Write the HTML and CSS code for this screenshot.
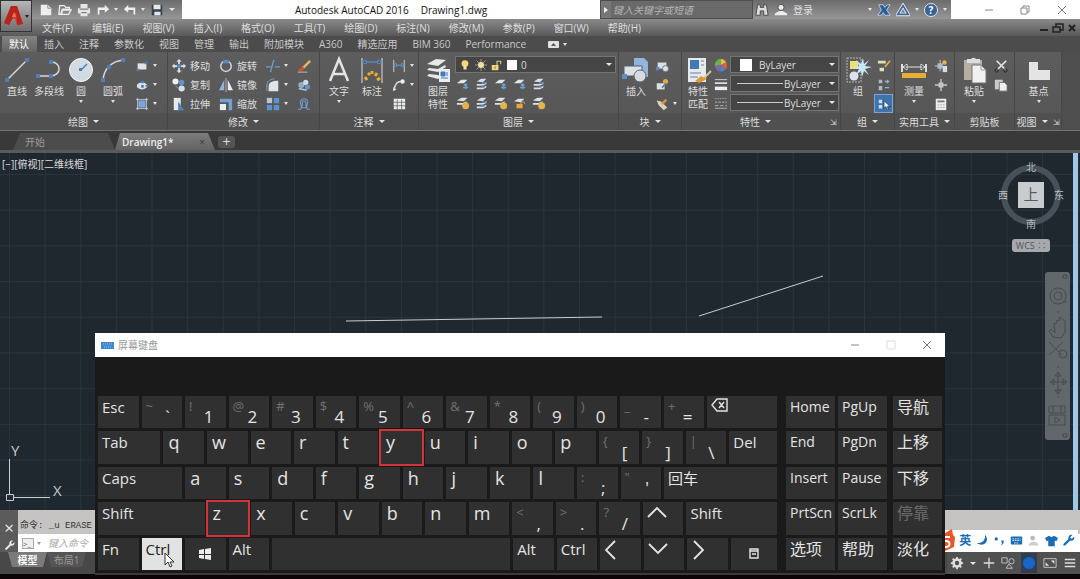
FILE: index.html
```html
<!DOCTYPE html>
<html lang="zh-CN">
<head>
<meta charset="utf-8">
<title>Autodesk AutoCAD 2016 - Drawing1.dwg</title>
<link rel="stylesheet" href="styles.css">
</head>
<body>
<svg class="sprite" aria-hidden="true">
  <symbol id="line" viewBox="0 0 28 28"><path d="M4 24 24 4" stroke="#d8d8d8" stroke-width="1.5"/><path d="M2 22h4v4H2zM22 2h4v4h-4z" fill="#4f7fb5"/></symbol>
  <symbol id="pline" viewBox="0 0 28 28"><path d="M3 20h12c12 0 12-14 1-14" fill="none" stroke="#d8d8d8" stroke-width="1.5"/><path d="M1 18h4v4H1zM14 18h4v4h-4zM14 4h4v4h-4z" fill="#4f7fb5"/></symbol>
  <symbol id="circle" viewBox="0 0 28 28"><circle cx="14" cy="14" r="11.500" fill="#d3dbe2" stroke="#f3f6f8"/><path d="m14 14 6-6" stroke="#4f7fb5" stroke-width="1.500"/><path d="M12 12h3v3h-3z" fill="#4f7fb5"/></symbol>
  <symbol id="arc" viewBox="0 0 28 28"><path d="M4 24C5 13 12 5 25 4" fill="none" stroke="#d8d8d8" stroke-width="1.500"/><path d="M2 22h4v4H2zM8 9h4v4H8zM22 2h4v4h-4z" fill="#4f7fb5"/></symbol>
  <symbol id="rect" viewBox="0 0 16 16"><path d="M3 5h10v7H3z" fill="#e3e5e8"/><path d="M2 11h3v3H2zM11 3h3v3h-3z" fill="#4f7fb5"/></symbol>
  <symbol id="ellipse" viewBox="0 0 16 16"><ellipse cx="8" cy="9" rx="6" ry="4" fill="#dbe1e8"/><path d="M7 8h3v3H7zM7 3h3v3H7zM12 8h3v2h-3z" fill="#4f7fb5"/></symbol>
  <symbol id="hatch" viewBox="0 0 16 16"><path d="M4 4h8v8H4z" fill="#7ba3dc"/><path d="M3 1v14M13 1v14M1 3h14M1 13h14" stroke="#c8d4e4"/></symbol>
  <symbol id="move" viewBox="0 0 16 16"><path d="M8 0 5 3h2v3h2V3h2zM8 16l-3-3h2v-3h2v3h2zM0 8l3-3v2h3v2H3v2zM16 8l-3-3v2h-3v2h3v2z" fill="#d5e2ef"/><path d="M6 6h4v4H6z" fill="#5b8ac0"/></symbol>
  <symbol id="copy" viewBox="0 0 16 16"><circle cx="4" cy="4" r="3.500" fill="#eee"/><circle cx="11" cy="5" r="3" fill="#6492c8"/><circle cx="11" cy="12" r="3.500" fill="#d7e1ec"/><path d="m4 9 3 3" stroke="#8eb3db"/></symbol>
  <symbol id="stretch" viewBox="0 0 16 16"><path d="M2 1h8v14H2z" fill="#e5e9ee"/><path d="m7 5 7 10H7z" fill="#4f82bb"/></symbol>
  <symbol id="rotate" viewBox="0 0 16 16"><path d="M5 3a6 6 0 1 0 6 0" fill="none" stroke="#c8d0d8" stroke-width="1.800"/><path d="M5 1h6v4H5z" fill="#5b8ac0"/></symbol>
  <symbol id="mirror" viewBox="0 0 16 16"><path d="M6 2v12H0z" fill="#8fb4dc"/><path d="M10 2v12h6z" fill="#e7ebef"/><path d="M8 0v16" stroke="#bbb"/></symbol>
  <symbol id="scale" viewBox="0 0 16 16"><path d="M1 2h14v13h-4V6H1z" fill="#77a0cd"/><path d="M1 8h7v7H1z" fill="#eee"/></symbol>
  <symbol id="trim" viewBox="0 0 16 16"><path d="M0 9h6M10 9h6M9 1 5 15" stroke="#7199c6" stroke-width="1.600"/></symbol>
  <symbol id="fillet" viewBox="0 0 16 16"><path d="M3 15V9c0-4 4-6 11-6v12z" fill="#dfe4e9"/><path d="M1 15V8c0-5 5-7 9-7" fill="none" stroke="#81acd9"/></symbol>
  <symbol id="array" viewBox="0 0 16 16"><path d="M1 1h6v6H1z" fill="#b9c5d3"/><path d="M9 1h6v6H9zM1 9h6v6H1zM9 9h6v6H9z" fill="#5d92d0"/></symbol>
  <symbol id="erase" viewBox="0 0 16 16"><path d="m14 1 2 2-8 8-2-2z" fill="#e1b760"/><path d="m6 8 3 3-4 3-4 0z" fill="#d25135"/><path d="M1 15h11" stroke="#ccc"/></symbol>
  <symbol id="explode" viewBox="0 0 16 16"><circle cx="5" cy="8" r="3.500" fill="#8eaeca"/><circle cx="10" cy="5" r="3" fill="#d2dce7"/><circle cx="12" cy="10" r="3" fill="#6593c2"/><path d="m2 12 9 2" stroke="#b8c8d7" stroke-width="2"/></symbol>
  <symbol id="offset" viewBox="0 0 16 16"><path d="M1 14h3c3-2-1-6 0-9 1-4 7-4 8 0 1 3-3 7 0 9h3M5 12h6c-2-3 0-4-1-6-1-2-4-2-4 0 0 3 1 3-1 6z" fill="none" stroke="#6f9ac4" stroke-width="1.300"/></symbol>
  <symbol id="bigtext" viewBox="0 0 28 28"><path d="M5 25 14 3l9 22M8 18h12" fill="none" stroke="#e4e4e4" stroke-width="2.500"/></symbol>
  <symbol id="dim" viewBox="0 0 28 28"><path d="M4 2v25M24 2v25" stroke="#ddd"/><path d="M4 6h20M4 6l4-2v4zM24 6l-4-2v4z" stroke="#5e96d1"/><path d="m7 21 2 3M10 17l2 2M14 15v3M19 17l-2 3M22 22l-3 2" stroke="#e9ae31" stroke-width="3"/></symbol>
  <symbol id="dimlin" viewBox="0 0 16 16"><path d="M2 1v14M14 1v14" stroke="#ddd"/><path d="M2 7h12M2 7l3-2v4zM14 7l-3-2v4z" stroke="#6ca0d8"/></symbol>
  <symbol id="leader" viewBox="0 0 16 16"><path d="M2 14C4 6 6 4 10 4" fill="none" stroke="#ddd" stroke-width="1.500"/><circle cx="12" cy="4" r="2.500" fill="#eee"/><path d="m1 15 1-5 3 3z" fill="#ddd"/></symbol>
  <symbol id="table" viewBox="0 0 16 16"><path d="M2 2h13v12H2z" fill="#eee"/><path d="M2 6h13M2 10h13M6 3v11M11 3v11" stroke="#68737d"/></symbol>
  <symbol id="stack" viewBox="0 0 28 28"><path d="m3 8 9-5 10 1-8 6zM3 14l2-2 9 1 7-4 1 2-8 5zM3 20l2-2 9 1 3 2-3 2z" fill="#e6e9ec"/><path d="M15 13h11v13H15z" fill="#e6edf4"/><path d="M17 16h4v4h-4zM17 22h7M23 16v4" fill="#477ab0" stroke="#477ab0"/></symbol>
  <symbol id="layer" viewBox="0 0 16 16"><path d="m2 5 5-3h6l-4 4zM2 8h7l4-2v2L9 10H2zM2 12h7l4-2v2l-4 2H2z" fill="#d8dee3"/><path d="M8 7h4M7 11h4" stroke="#5686b8" stroke-width="2"/></symbol>
  <symbol id="layersun" viewBox="0 0 16 16"><path d="m1 5 5-3h7L9 6zM1 8h7l4-2v2L8 10H1z" fill="#dfe2e4"/><circle cx="11" cy="11" r="4" fill="#e4b44b"/></symbol>
  <symbol id="layerlock" viewBox="0 0 16 16"><path d="m1 6 5-3h7L9 7z" fill="#dfe2e4"/><path d="M4 9h7v5H4z" fill="#e4a83f"/><path d="M9 9V7h4v2" fill="none" stroke="#e4a83f"/></symbol>
  <symbol id="layerblue" viewBox="0 0 16 16"><path d="m1 7 5-4h7L9 7z" fill="#e2e6e9"/><path d="M9 9h4M11 7v7M8 12h6" stroke="#6c9fd3" stroke-width="1.800"/></symbol>
  <symbol id="bulb" viewBox="0 0 16 16"><circle cx="8" cy="6" r="4.500" fill="#f4d779"/><path d="M6 9h4v5H6z" fill="#ede3b1"/></symbol>
  <symbol id="sun" viewBox="0 0 16 16"><path d="M8 0v16M0 8h16M2 2l12 12M14 2 2 14" stroke="#b8b399"/><circle cx="8" cy="8" r="4" fill="#f0dfab"/></symbol>
  <symbol id="lock" viewBox="0 0 16 16"><path d="M1 8h9v7H1z" fill="#f0d476"/><path d="M8 8V3h5v4" fill="none" stroke="#d6c68f" stroke-width="1.500"/><path d="M5 10h1v3H5z" fill="#555"/></symbol>
  <symbol id="insert" viewBox="0 0 28 28"><path d="M12 2h10l4 4v15H12z" fill="#92b5dc"/><path d="M2 10h18v10H2z" fill="#dde0e4" stroke="#515d68"/><circle cx="18" cy="20" r="6" fill="#d6dbe0" stroke="#5b6874"/><path d="M0 18h5v5H0z" fill="#5b8dc3"/></symbol>
  <symbol id="block" viewBox="0 0 16 16"><path d="M3 4h10v7H3z" fill="#dae0e6"/><circle cx="12" cy="11" r="3.500" fill="#dce1e6" stroke="#626e79"/><path d="M1 9h4v4H1z" fill="#578bc2"/></symbol>
  <symbol id="blockedit" viewBox="0 0 16 16"><path d="M2 6h9v7H2z" fill="#d9dfe6"/><circle cx="12" cy="4" r="3" fill="#e7a544"/><path d="m8 11 5-5" stroke="#547da9" stroke-width="2"/></symbol>
  <symbol id="tag" viewBox="0 0 16 16"><path d="m2 4 5 1 7 7-4 3-6-6z" fill="#dbd1bd"/><path d="m13 3-5 5" stroke="#ce9540" stroke-width="3"/></symbol>
  <symbol id="match" viewBox="0 0 28 28"><path d="M4 2h18v24H4z" fill="#e7eaed"/><path d="M6 4h9v9H6z" fill="#447ab3"/><path d="M17 5h3M17 9h3M6 17h11M6 21h8" stroke="#6983a0"/><path d="m27 15-7 7" stroke="#d8c39a" stroke-width="2"/><path d="m17 20 6 3-8 4-4-2z" fill="#d99b3b"/></symbol>
  <symbol id="wheel" viewBox="0 0 16 16"><path d="M8 8V1a7 7 0 0 1 6 4z" fill="#e7bd45"/><path d="m8 8 6-3a7 7 0 0 1-1 8z" fill="#e25b42"/><path d="m8 8 5 5a7 7 0 0 1-7 2z" fill="#4486ce"/><path d="m8 8-2 7a7 7 0 0 1-5-6z" fill="#8b62ae"/><path d="M8 8 1 9a7 7 0 0 1 7-8z" fill="#6cae52"/></symbol>
  <symbol id="weights" viewBox="0 0 16 16"><path d="M1 3h14" stroke="#ddd"/><path d="M1 7h14" stroke="#ddd" stroke-width="2"/><path d="M1 13h14" stroke="#eee" stroke-width="4"/></symbol>
  <symbol id="dashes" viewBox="0 0 16 16"><path d="M1 3h14" stroke="#bbb" stroke-dasharray="1 1"/><path d="M1 7h14" stroke="#bbb" stroke-dasharray="3 1"/><path d="M1 11h14" stroke="#bbb" stroke-dasharray="4 2"/><path d="M1 14h14" stroke="#bbb"/></symbol>
  <symbol id="group" viewBox="0 0 28 28"><path d="M3 2h14v24H3z" fill="none" stroke="#b6b6b6" stroke-dasharray="2 1"/><path d="M6 5h8v8H6z" fill="#ecdf7a"/><circle cx="10" cy="20" r="4.500" fill="#dde4e9"/><path d="m19 2 1 6 5-4-4 6 7 1-7 2 4 6-5-4-2 6-1-6-5 4 3-6-6-1 6-2-3-6 5 4z" fill="#c8e6fa"/></symbol>
  <symbol id="groupedit" viewBox="0 0 16 16"><path d="M1 2h9v3H1zM3 10h5v4H3z" fill="#dfe2b8"/><path d="m15 2-6 7" stroke="#e2ab43" stroke-width="2"/></symbol>
  <symbol id="ungroup" viewBox="0 0 16 16"><path d="M2 2h4v4H2zM2 9h4v5H2z" fill="#adbac9"/><path d="M9 4h5M12 2v4M9 11h5" stroke="#96b0d3" stroke-width="1.500"/></symbol>
  <symbol id="select" viewBox="0 0 16 16"><path d="M2 3h4v4H2zM2 9h4v4H2z" fill="#c7ddf3"/><path d="M8 4v9l2-2 2 4 1-1-1-3h3z" fill="#fff" stroke="#17395d"/></symbol>
  <symbol id="measure" viewBox="0 0 28 28"><path d="M2 8v8M26 8v8" stroke="#ddd" stroke-width="2"/><path d="M3 11h22M3 11l4-3v6zM25 11l-4-3v6z" stroke="#dce3e9"/><path d="M2 17h24v5H2z" fill="#e6ae36"/></symbol>
  <symbol id="idpoint" viewBox="0 0 16 16"><path d="M7 1v13M1 8h9" stroke="#d1d5d9"/><path d="M4 5h6v6H4z" fill="#aebcca"/><path d="M10 8h5v7h-5z" fill="#ddd"/><circle cx="12" cy="4" r="2.500" fill="#e8b34b"/></symbol>
  <symbol id="point" viewBox="0 0 16 16"><path d="M8 1v14M1 8h14M6 6h4v4H6z" fill="none" stroke="#c5cad0" stroke-width="1.500"/></symbol>
  <symbol id="calc" viewBox="0 0 16 16"><path d="M2 2h12v13H2z" fill="#ececec"/><path d="M4 4h8v2H4z" fill="#777"/><path d="M4 9h8M4 12h8" stroke="#aaa" stroke-dasharray="2 1"/></symbol>
  <symbol id="paste" viewBox="0 0 28 28"><path d="M4 4h18v20H4z" fill="#b7aea3"/><path d="M7 3h4a3 3 0 0 1 5 0h4v4H7z" fill="#ddd"/><path d="M12 9h9l5 5v13H12z" fill="#f1f1f1" stroke="#777"/><path d="M21 9v5h5" fill="none" stroke="#999"/></symbol>
  <symbol id="cut" viewBox="0 0 16 16"><path d="m3 2 10 10M14 2 4 12" stroke="#e2e2e2" stroke-width="2"/><circle cx="3" cy="13" r="2" fill="none" stroke="#222"/><circle cx="13" cy="13" r="2" fill="none" stroke="#222"/></symbol>
  <symbol id="pages" viewBox="0 0 16 16"><path d="M1 2h9v11H1z" fill="#ccc"/><path d="M6 5h6l3 3v7H6z" fill="#eee" stroke="#666"/></symbol>
  <symbol id="base" viewBox="0 0 28 28"><path d="M4 6h9v8h12v10H4z" fill="#e4e4e4"/></symbol>
  <symbol id="undo" viewBox="0 0 16 16"><path d="M1 7 6 2v3h8v8h-2V8H6v3z" fill="#eee"/></symbol>
  <symbol id="redo" viewBox="0 0 16 16"><path d="m15 7-5-5v3H2v8h2V8h6v3z" fill="#eee"/></symbol>
  <symbol id="wrench" viewBox="0 0 16 16"><path d="m2 12 6-6c-1-3 2-6 5-5l-3 3 2 2 3-3c1 4-2 6-5 5l-6 6c-2 1-3-1-2-2z" fill="currentColor"/></symbol>
</svg>

<div class="app">
  <header class="top">
    <button class="appmenu" aria-label="应用程序菜单"><svg width="20" height="22" viewBox="0 0 20 22"><path d="M7 1h6l6 18-6 1-2-6H8l-3 6-5-2z" fill="#d8412f"/><path d="m7 1-7 17 5 2 7-13 1 13 6-1-6-18z" fill="#b5251b"/><path d="m8 12 2-5 2 5z" fill="#ed7662"/></svg><i class="caret dark"></i></button>
    <div class="titlebar">
      <div class="quick">
        <button aria-label="新建"><svg viewBox="0 0 16 16"><path d="M2 2h8l4 4v8H2z" fill="#eee"/><path d="M10 2v4h4" stroke="#888" fill="none"/></svg></button>
        <button aria-label="打开"><svg viewBox="0 0 16 16"><path d="M2 3h5l2 2h4v2H5l-2 6H1zM5 8h10l-3 5H4z" fill="none" stroke="#eee" stroke-width="1.500"/></svg></button>
        <button aria-label="打印"><svg viewBox="0 0 16 16"><path d="M4 1h8v5h3v6h-3v3H4v-3H1V6h3z" fill="#e5e5e5"/><path d="M3 7h10M5 11h6" stroke="#555"/></svg></button>
        <button aria-label="重做"><svg><use href="#redo"/></svg><i class="caret"></i></button>
        <button aria-label="放弃"><svg><use href="#undo"/></svg><i class="caret"></i></button>
        <button aria-label="保存"><svg viewBox="0 0 16 16"><path d="M2 2h12v12H2z" fill="#36424d"/><path d="M4 2h8v5H4zM5 10h7v4H5z" fill="#e5e9ec"/></svg></button>
        <button aria-label="自定义"><i class="caret wide"></i></button>
      </div>
      <div class="doc"><span>Autodesk AutoCAD 2016</span><span>Drawing1.dwg</span></div>
      <div class="search"><i class="right"></i><input aria-label="搜索" placeholder="键入关键字或短语"></div>
      <div class="account">
        <svg viewBox="0 0 16 16"><path d="M3 2h3v3h4V2h3l2 12h-5V9H6v5H1z" fill="#dedede" stroke="#444"/></svg>
        <svg viewBox="0 0 16 16"><circle cx="8" cy="5" r="3.500" fill="#e9edf0" stroke="#444"/><path d="M6 9h4l5 3v2H1v-2z" fill="#e9edf0"/></svg>
        <button>登录</button>
        <i class="caret push"></i>
        <svg viewBox="0 0 16 16"><path d="M2 2h5l2 3 3-3h3l-4 6 4 6H9l-2-3-2 3H1l4-6z" fill="#2d5d9b" stroke="#c5d4e5"/></svg>
        <svg viewBox="0 0 16 16"><path d="M8 3 2 13h12z" fill="none" stroke="#e4eaf2" stroke-width="4"/><path d="M8 3 2 13h12z" fill="none" stroke="#416898" stroke-width="2"/></svg>
        <i class="caret"></i>
        <button class="help" aria-label="帮助">?</button><i class="caret"></i>
      </div>
      <div class="winctl">
        <button aria-label="最小化"><svg viewBox="0 0 12 12"><path d="M2 6h8" stroke="#888"/></svg></button>
        <button aria-label="还原"><svg viewBox="0 0 12 12"><path d="M2 4h6v6H2zM4 4V2h6v6H8" fill="none" stroke="#888"/></svg></button>
        <button aria-label="关闭"><svg viewBox="0 0 12 12"><path d="m2 2 8 8M10 2l-8 8" stroke="#777"/></svg></button>
      </div>
    </div>
    <nav class="menubar">
      <button>文件(F)</button><button>编辑(E)</button><button>视图(V)</button><button>插入(I)</button><button>格式(O)</button><button>工具(T)</button><button>绘图(D)</button><button>标注(N)</button><button>修改(M)</button><button>参数(P)</button><button>窗口(W)</button><button>帮助(H)</button>
      <div class="mdi"><svg viewBox="0 0 12 12"><path d="M2 8h8" stroke="#222" stroke-width="2"/></svg><svg viewBox="0 0 12 12"><path d="M1 5h7v5H1zM4 5V2h7v6H8" fill="none" stroke="#222" stroke-width="1.500"/></svg><svg viewBox="0 0 12 12"><path d="m3 3 6 6M9 3 3 9" stroke="#222" stroke-width="2"/></svg></div>
    </nav>
  </header>

  <nav class="tabs">
    <button class="on">默认</button><button>插入</button><button>注释</button><button>参数化</button><button>视图</button><button>管理</button><button>输出</button><button>附加模块</button><button>A360</button><button>精选应用</button><button>BIM 360</button><button>Performance</button>
    <button class="cam" aria-label="显示"><svg width="11" height="7" viewBox="0 0 11 7"><rect width="11" height="7" rx="1" fill="#e2e2e2"/><path d="m3 5 2.500-3L8 5z" fill="#555"/></svg><i class="caret"></i></button>
  </nav>

  <div class="ribbon">
    <section class="panel p-draw"><div class="tools">
      <button class="big"><svg><use href="#line"/></svg>直线</button>
      <button class="big"><svg><use href="#pline"/></svg>多段线</button>
      <button class="big"><svg><use href="#circle"/></svg>圆<i class="caret"></i></button>
      <button class="big"><svg><use href="#arc"/></svg>圆弧<i class="caret"></i></button>
      <div class="col"><button aria-label="矩形"><svg><use href="#rect"/></svg><i class="caret"></i></button><button aria-label="椭圆"><svg><use href="#ellipse"/></svg><i class="caret"></i></button><button aria-label="图案填充"><svg><use href="#hatch"/></svg><i class="caret"></i></button></div>
    </div><h2>绘图<i class="caret wide"></i></h2></section>

    <section class="panel p-mod"><div class="tools">
      <div class="col"><button><svg><use href="#move"/></svg>移动</button><button><svg><use href="#copy"/></svg>复制</button><button><svg><use href="#stretch"/></svg>拉伸</button></div>
      <div class="col"><button><svg><use href="#rotate"/></svg>旋转</button><button><svg><use href="#mirror"/></svg>镜像</button><button><svg><use href="#scale"/></svg>缩放</button></div>
      <div class="col"><button aria-label="修剪"><svg><use href="#trim"/></svg><i class="caret"></i></button><button aria-label="圆角"><svg><use href="#fillet"/></svg><i class="caret"></i></button><button aria-label="阵列"><svg><use href="#array"/></svg><i class="caret"></i></button></div>
      <div class="col"><button aria-label="删除"><svg><use href="#erase"/></svg></button><button aria-label="分解"><svg><use href="#explode"/></svg></button><button aria-label="偏移"><svg><use href="#offset"/></svg></button></div>
    </div><h2>修改<i class="caret wide"></i></h2></section>

    <section class="panel p-ann"><div class="tools">
      <button class="big"><svg><use href="#bigtext"/></svg>文字<i class="caret"></i></button>
      <button class="big"><svg><use href="#dim"/></svg>标注</button>
      <div class="col"><button aria-label="线性"><svg><use href="#dimlin"/></svg><i class="caret"></i></button><button aria-label="引线"><svg><use href="#leader"/></svg><i class="caret"></i></button><button aria-label="表格"><svg><use href="#table"/></svg></button></div>
    </div><h2>注释<i class="caret wide"></i></h2></section>

    <section class="panel p-lay"><div class="tools">
      <button class="big"><svg><use href="#stack"/></svg>图层<br>特性</button>
      <div class="layers">
        <button class="combo" aria-label="当前图层"><svg><use href="#bulb"/></svg><svg><use href="#sun"/></svg><svg><use href="#lock"/></svg><i class="swatch"></i>0<i class="caret wide push"></i></button>
        <div class="iconrow"><svg><use href="#layerblue"/></svg><svg><use href="#layer"/></svg><svg><use href="#layerblue"/></svg><svg><use href="#layerblue"/></svg><svg><use href="#layer"/></svg></div>
        <div class="iconrow"><svg><use href="#layersun"/></svg><svg><use href="#layer"/></svg><svg><use href="#layersun"/></svg><svg><use href="#layerlock"/></svg><svg><use href="#layersun"/></svg></div>
      </div>
    </div><h2>图层<i class="caret wide"></i></h2></section>

    <section class="panel p-blk"><div class="tools">
      <button class="big"><svg><use href="#insert"/></svg>插入</button>
      <div class="col"><button aria-label="创建"><svg><use href="#block"/></svg></button><button aria-label="编辑"><svg><use href="#blockedit"/></svg></button><button aria-label="编辑属性"><svg><use href="#tag"/></svg><i class="caret"></i></button></div>
    </div><h2>块<i class="caret wide"></i></h2></section>

    <section class="panel p-prop"><div class="tools">
      <button class="big"><svg><use href="#match"/></svg>特性<br>匹配</button>
      <div class="props">
        <svg><use href="#wheel"/></svg><button class="combo"><i class="swatch big-sw"></i>ByLayer<i class="caret wide push"></i></button>
        <svg><use href="#weights"/></svg><button class="combo"><i class="rule"></i>ByLayer<i class="caret wide push"></i></button>
        <svg><use href="#dashes"/></svg><button class="combo"><i class="rule"></i>ByLayer<i class="caret wide push"></i></button>
      </div>
    </div><h2>特性<i class="caret wide"></i><i class="launch">⇲</i></h2></section>

    <section class="panel p-grp"><div class="tools">
      <button class="big"><svg><use href="#group"/></svg>组</button>
      <div class="col"><button aria-label="组编辑"><svg><use href="#groupedit"/></svg></button><button aria-label="解除编组"><svg><use href="#ungroup"/></svg></button><button class="lit" aria-label="组选择"><svg><use href="#select"/></svg></button></div>
    </div><h2>组<i class="caret wide"></i></h2></section>

    <section class="panel p-util"><div class="tools">
      <button class="big"><svg><use href="#measure"/></svg>测量<i class="caret"></i></button>
      <div class="col"><button aria-label="点坐标"><svg><use href="#idpoint"/></svg></button><button aria-label="点"><svg><use href="#point"/></svg></button><button aria-label="计算器"><svg><use href="#calc"/></svg></button></div>
    </div><h2>实用工具<i class="caret wide"></i></h2></section>

    <section class="panel p-util"><div class="tools">
      <button class="big"><svg><use href="#paste"/></svg>粘贴<i class="caret"></i></button>
      <div class="col"><button aria-label="剪切"><svg><use href="#cut"/></svg></button><button aria-label="复制剪裁"><svg><use href="#pages"/></svg></button></div>
    </div><h2>剪贴板</h2></section>

    <section class="panel p-view"><div class="tools">
      <button class="big"><svg><use href="#base"/></svg>基点<i class="caret"></i></button>
    </div><h2>视图<i class="caret wide"></i><i class="launch">⇲</i></h2></section>
  </div>

  <div class="files">
    <button class="file">开始</button>
    <button class="file on">Drawing1*<span>×</span></button>
    <button class="add" aria-label="新图形">+</button>
  </div>

  <main class="canvas">
    <svg class="drawing" aria-hidden="true"><path d="m346 168 256-4M699 163l124-40" stroke="#c9cdd0" fill="none"/></svg>
    <span class="viewlabel">[−][俯视][二维线框]</span>
    <svg class="ucs" width="66" height="64" viewBox="0 0 66 64"><path d="M9.500 18v35M13 56.500h37M6.500 53.500h7v6h-7z" fill="none" stroke="#c9cdd0"/><text x="11" y="15">Y</text><text x="53" y="55">X</text></svg>
    <div class="cube">
      <svg width="68" height="72" viewBox="0 0 68 72"><circle cx="34" cy="35" r="27" fill="none" stroke="#48515a" stroke-width="6"/><path d="M21 22h26v26H21z" fill="#c9cccf"/><text x="34" y="11">北</text><text x="34" y="68">南</text><text x="6" y="39">西</text><text x="62" y="39">东</text><text class="face" x="34" y="40">上</text></svg>
      <button>WCS <span>∷</span></button>
    </div>
    <div class="navbar"><svg width="25" height="168" viewBox="0 0 25 168" fill="none" stroke="#474c51"><path d="M18 3h4v3h-4zM18 162h4v3h-4z"/><circle cx="13" cy="24" r="8"/><circle cx="13" cy="24" r="4"/><path d="M18 30h4M12 40h2M12 95h2M12 125h2M8 65l-4-6 2-2 4 4-1-10 2 1 1-4 2 1 1-4 2 2 3 2v11l-4 6zM4 70l13 13M18 70 4 83"/><circle cx="18" cy="82" r="4"/><path d="M13 100v22M5 110h17M13 100l-3 4h6zM13 122l-3-4h6zM5 110l4-3v6zM22 110l-4-3v6z"/><path d="M4 134h16v7H4zM4 143h16v10H4zM10 145v6l5-3zM8 134v7M16 134v7"/></svg></div>
    <div class="scroll"></div>
  </main>

  <div class="command">
    <div class="grip"><span>×</span><svg><use href="#wrench"/></svg></div>
    <div class="cmdbody">
      <div class="history">命令: _u ERASE</div>
      <label class="prompt"><span>&gt;_</span><i class="caret grey"></i><input aria-label="命令" placeholder="键入命令"></label>
    </div>
    <div class="ime">
      <svg class="sogou" viewBox="0 0 10 22"><path d="M0 4 7 0l1 6 2 2-1 10-9 4z" fill="#e8562b"/><path d="M0 8h5M0 12c6-1 6 6 0 6" fill="none" stroke="#fff" stroke-width="2"/></svg>
      <b>英</b>
      <svg viewBox="0 0 16 16"><path d="M11 1c7 8-2 16-10 10 6 1 11-3 10-10z" fill="#1c6cb5"/></svg>
      <svg viewBox="0 0 16 16"><circle cx="4" cy="6" r="2" fill="#1c6cb5"/><path d="M10 8h3c1 3-1 5-3 6l1-3z" fill="#1c6cb5"/></svg>
      <svg viewBox="0 0 16 16"><rect x="1" y="3" width="14" height="10" rx="1" fill="#1c6cb5"/><path d="M3 6h10M3 8h10M5 11h6" stroke="#fff" stroke-dasharray="2 1"/></svg>
      <svg viewBox="0 0 16 16"><circle cx="7" cy="5" r="3" fill="#bbb"/><path d="M2 14c0-6 12-6 12 0z" fill="#ccc"/></svg>
      <svg viewBox="0 0 16 16"><path d="m5 2 3 2 3-2 5 3-2 4-2-1v7H4V8L2 9 0 5z" fill="#1c6cb5"/></svg>
      <svg><use href="#wrench"/></svg>
    </div>
  </div>

  <footer class="status">
    <button class="sheet on">模型</button><button class="sheet">布局1</button>
    <div class="icons">
      <svg viewBox="0 0 16 16"><circle cx="8" cy="8" r="4" fill="none" stroke="#ddd" stroke-width="3"/><path d="M8 1v14M1 8h14M3 3l10 10M13 3 3 13" stroke="#ddd" stroke-width="2" stroke-dasharray="3 8"/></svg><i class="caret wide"></i>
      <svg viewBox="0 0 16 16"><path d="M8 2v12M2 8h12" stroke="#ddd" stroke-width="1.500"/></svg>
      <svg viewBox="0 0 16 16"><path d="M1 2h6v6H1zM9 9l4 5H6z" fill="none" stroke="#ccc"/><circle cx="12" cy="6" r="3" fill="none" stroke="#ccc"/></svg>
      <svg class="act" viewBox="0 0 16 16"><circle cx="8" cy="8" r="6" fill="#1767ca"/></svg>
      <svg viewBox="0 0 16 16"><path d="M1 3h14v10H1z" fill="none" stroke="#ccc"/><path d="M9 5h4v4zM3 7v4h4z" fill="#ddd"/></svg>
      <svg viewBox="0 0 16 16"><path d="M2 4h12M2 8h12M2 12h12" stroke="#ddd" stroke-width="1.500"/></svg>
    </div>
  </footer>

  <section class="osk" aria-label="屏幕键盘">
    <header><svg width="13" height="7" viewBox="0 0 13 7"><path d="M0 0h13v7H0z" fill="#4088c8"/><path d="M2 2h9M3 5h7" stroke="#9ec4e5" stroke-dasharray="1 1"/></svg><span>屏幕键盘</span>
      <div><svg viewBox="0 0 12 12"><path d="M2 6h8" stroke="#888"/></svg><svg viewBox="0 0 12 12"><path d="M2 2h8v8H2z" fill="none" stroke="#ddd"/></svg><svg viewBox="0 0 12 12"><path d="m2 2 8 8M10 2l-8 8" stroke="#777"/></svg></div>
    </header>
    <div class="keys">
      <div class="main">
        <div class="row">
          <button>Esc</button><button class="two"><sup>~</sup>`</button><button class="two"><sup>!</sup>1</button><button class="two"><sup>@</sup>2</button><button class="two"><sup>#</sup>3</button><button class="two"><sup>$</sup>4</button><button class="two"><sup>%</sup>5</button><button class="two"><sup>^</sup>6</button><button class="two"><sup>&amp;</sup>7</button><button class="two"><sup>*</sup>8</button><button class="two"><sup>(</sup>9</button><button class="two"><sup>)</sup>0</button><button class="two"><sup>_</sup>-</button><button class="two"><sup>+</sup>=</button><button class="w-rest" aria-label="退格"><svg width="17" height="14" viewBox="0 0 17 14"><path d="M6 1h10v12H6L1 7z M8 4l5 6M13 4l-5 6" fill="none" stroke="#e4e4e4" stroke-width="1.400"/></svg></button>
        </div>
        <div class="row">
          <button class="w-tab">Tab</button><button class="ch">q</button><button class="ch">w</button><button class="ch">e</button><button class="ch">r</button><button class="ch">t</button><button class="ch ring">y</button><button class="ch">u</button><button class="ch">i</button><button class="ch">o</button><button class="ch">p</button><button class="two"><sup>{</sup>[</button><button class="two"><sup>}</sup>]</button><button class="two"><sup>|</sup>\</button><button class="w-rest">Del</button>
        </div>
        <div class="row">
          <button class="w-caps">Caps</button><button class="ch">a</button><button class="ch">s</button><button class="ch">d</button><button class="ch">f</button><button class="ch">g</button><button class="ch">h</button><button class="ch">j</button><button class="ch">k</button><button class="ch">l</button><button class="two"><sup>:</sup>;</button><button class="two"><sup>"</sup>'</button><button class="w-rest">回车</button>
        </div>
        <div class="row">
          <button class="w-shift">Shift</button><button class="ch ring">z</button><button class="ch">x</button><button class="ch">c</button><button class="ch">v</button><button class="ch">b</button><button class="ch">n</button><button class="ch">m</button><button class="two"><sup>&lt;</sup>,</button><button class="two"><sup>&gt;</sup>.</button><button class="two"><sup>?</sup>/</button><button aria-label="上"><svg width="20" height="20" viewBox="0 0 20 20"><path d="m1 13 9-9 9 9"/></svg></button><button class="w-rest">Shift</button>
        </div>
        <div class="row">
          <button>Fn</button><button class="down">Ctrl<svg class="cursor" width="11" height="16" viewBox="0 0 11 16"><path d="M1 1v12l3-3 2 5 2-1-2-4h4z" fill="#fff" stroke="#333"/></svg></button><button class="mid" aria-label="Windows"><svg width="12" height="12" viewBox="0 0 12 12"><path d="m0 2 5-1v5H0zM6 1l6-1v6H6zM0 7h5v4l-5-1zM6 7h6v5l-6-1z" fill="#eee"/></svg></button><button>Alt</button><button class="w-rest" aria-label="空格"></button><button>Alt</button><button>Ctrl</button><button aria-label="左"><svg width="20" height="20" viewBox="0 0 20 20"><path d="m11 1-9 9 9 9"/></svg></button><button aria-label="下"><svg width="20" height="20" viewBox="0 0 20 20"><path d="m1 4 9 9 9-9"/></svg></button><button aria-label="右"><svg width="20" height="20" viewBox="0 0 20 20"><path d="m3 1 9 9-9 9"/></svg></button><button class="mid w-menu" aria-label="菜单"><svg width="10" height="11" viewBox="0 0 10 11"><path d="M1 1h8v9H1zM1 3h8M3 6h4" fill="none" stroke="#e4e4e4" stroke-width="1.400"/></svg></button>
        </div>
      </div>
      <div class="nav">
        <button>Home</button><button>PgUp</button><button>End</button><button>PgDn</button><button>Insert</button><button>Pause</button><button>PrtScn</button><button>ScrLk</button><button>选项</button><button>帮助</button>
      </div>
      <div class="side">
        <button>导航</button><button>上移</button><button>下移</button><button disabled>停靠</button><button>淡化</button>
      </div>
    </div>
  </section>
</div>
</body>
</html>
```
FILE: styles.css
```css
* { box-sizing: border-box; }
body { margin: 0; background: #0c0306; font: 10px/14px "Open Sans", "Noto Sans CJK SC", sans-serif; color: #dedede; }
button { margin: 0; padding: 0; border: 0; background: none; color: inherit; font: inherit; white-space: nowrap; }
input { min-width: 0; padding: 0; border: 0; background: none; font: inherit; }
svg { flex: none; }
.sprite { position: absolute; width: 0; height: 0; }
.app { position: relative; display: flex; flex-direction: column; height: 100vh; padding-bottom: 5px; overflow: hidden; }

.caret { flex: none; width: 0; height: 0; border: 2px solid transparent; border-top: 3px solid #e4e4e4; border-bottom: 0; }
.caret.wide { border-left-width: 3px; border-right-width: 3px; }
.caret.dark { border-top-color: #222; }
.caret.grey { border-top-color: #999; }
.push { margin-left: auto; }

/* Title bar and menu bar */
.top { display: grid; grid-template-columns: 32px 1fr; grid-template-rows: 19px 17px; background: linear-gradient(#8d8d8d 19px, #8a8a8a 19px, #595959); }
.appmenu { grid-row: 1 / 3; display: flex; align-items: center; justify-content: center; gap: 1px; height: 32px; border: 1px solid #333; background: linear-gradient(#b5b5b5, #6f6f6f); }
.titlebar { display: flex; background: #fff; }
.quick, .account { display: flex; align-items: center; background: linear-gradient(#6b6b6b, #979797); }
.quick { width: 150px; padding-left: 7px; gap: 5px; }
.quick button { display: flex; align-items: center; gap: 4px; }
.quick svg, .account svg { width: 14px; height: 14px; }
.doc { flex: 1; display: flex; justify-content: center; align-items: center; gap: 12px; color: #111; }
.search { display: flex; align-items: center; width: 153px; background: #777; border: 1px solid #4d4d4d; }
.search input { flex: 1; height: 17px; padding-left: 2px; background: #696969; color: #ddd; }
.search input::placeholder { color: #b3b3b3; font-style: italic; opacity: 1; }
.right { margin: 0 3px; border: 3px solid transparent; border-left: 4px solid #eee; border-right: 0; }
.account { width: 198px; padding: 0 4px 0 2px; gap: 5px; }
.help { width: 14px; height: 14px; border: 1px solid #dfe8f1; border-radius: 50%; background: #376291; color: #fff; font-weight: 700; font-size: 10px; line-height: 12px; }
.winctl { display: flex; align-items: center; justify-content: space-around; width: 129px; padding-left: 20px; }
.winctl svg, .mdi svg { display: block; width: 12px; height: 12px; }
.menubar { display: flex; align-items: center; gap: 19px; padding-left: 10px; }
.mdi { display: flex; gap: 2px; margin: 0 2px 0 auto; }

/* Ribbon */
.tabs { display: flex; height: 16px; padding-left: 2px; background: #4c4c4c; color: #c9c9c9; }
.tabs button { padding: 0 8px 0 7px; }
.tabs .on { background: linear-gradient(#838383, #656565); color: #fff; }
.tabs .cam { display: flex; align-items: center; gap: 4px; margin-left: 7px; }
.ribbon { display: flex; height: 79px; background: #4e4e4e; border-bottom: 1px solid #727272; }
.panel { display: flex; flex-direction: column; border-right: 1px solid #474747; background: linear-gradient(#5d5d5d, #555); }
.p-draw { width: 168px; } .p-mod { width: 152px; } .p-ann { width: 99px; } .p-lay { width: 200px; } .p-blk { width: 63px; }
.p-prop { width: 159px; } .p-grp { width: 54px; } .p-util { width: 60px; } .p-view { width: 47px; }
.tools { flex: 1; display: flex; padding: 4px 2px 0 3px; gap: 1px; }
.panel h2 { display: flex; align-items: center; justify-content: center; gap: 5px; height: 17px; margin: 0; background: #505050; font: inherit; }
.launch { font-style: normal; font-size: 8px; }
.p-prop .launch { margin-left: auto; padding-right: 3px; }
.p-prop h2 { padding-left: 58px; }
.big { display: flex; flex: none; flex-direction: column; align-items: center; width: 32px; line-height: 13px; }
.big svg { width: 28px; height: 28px; margin-bottom: 1px; }
.big .caret { margin-top: 2px; }
.col { display: flex; flex-direction: column; }
.col button { display: flex; align-items: center; gap: 4px; height: 19px; padding-left: 3px; }
.col svg, .iconrow svg, .props svg { width: 14px; height: 14px; }
.p-mod .tools { gap: 6px; padding-left: 1px; }
.p-draw .tools, .p-blk .tools, .p-grp .tools { gap: 0; padding-left: 1px; }
.p-draw .col { margin-left: 3px; }
.p-prop .tools { gap: 0; padding: 4px 1px 0 0; }
.p-view .tools { justify-content: center; }
.col .lit { width: 19px; padding-left: 2px; background: #3f73ad; border: 1px solid #79a6d7; }
.combo { display: flex; align-items: center; gap: 4px; height: 17px; padding: 0 3px; border: 1px solid #747474; background: #454545; }
.swatch { width: 10px; height: 10px; background: #fff; }
.big-sw { width: 12px; height: 12px; margin: 0 3px 0 6px; }
.rule { width: 46px; height: 1px; margin: 0 -3px 0 3px; background: #ccc; }
.layers { flex: 1; display: flex; flex-direction: column; gap: 2px; }
.layers .combo svg { width: 12px; height: 12px; }
.iconrow { display: flex; gap: 5px; height: 17px; padding: 2px 1px; }
.props { flex: 1; min-width: 0; display: grid; grid-template-columns: 16px 1fr; grid-auto-rows: 17px; gap: 2px 0; align-items: center; justify-items: stretch; }

/* Drawing tabs */
.files { display: flex; align-items: flex-end; height: 22px; padding-left: 13px; background: #393939; border-bottom: 3px solid #5a5a5a; }
.file { width: 102px; height: 17px; padding-left: 12px; background: #4c4c4c; color: #9d9d9d; text-align: left; clip-path: polygon(0 100%, 7px 0, 95px 0, 100% 100%); }
.file.on { display: flex; justify-content: space-between; align-items: center; width: 100px; padding: 0 10px 0 7px; background: linear-gradient(#7c7c7c, #636363); color: #eee; font-weight: 600; clip-path: polygon(0 100%, 5px 0, 93px 0, 100% 100%); }
.file.on span { color: #444; }
.add { width: 17px; height: 12px; margin: 0 0 2px 3px; border-radius: 3px; background: #555; line-height: 10px; font-size: 14px; }

/* Model space */
.canvas { position: relative; flex: 1; overflow: hidden; background: linear-gradient(90deg, #2b343d 1px, transparent 1px) 9px 0 / 3.3% 100%, linear-gradient(#2b343d 1px, transparent 1px) 0 21px / 100% 10%, #1f272f; }
.drawing { position: absolute; inset: 0; width: 100%; height: 100%; }
.viewlabel { position: absolute; left: 2px; top: 4px; }
.ucs { position: absolute; left: 0; bottom: 5px; }
.ucs text { fill: #c9cdd0; font: 15px "Open Sans", sans-serif; }
.cube { position: absolute; right: 15px; top: 7px; display: flex; flex-direction: column; align-items: center; gap: 7px; }
.cube text { fill: #b9bcbf; font-size: 10px; text-anchor: middle; }
.cube .face { fill: #555b60; font-size: 15px; }
.cube button { width: 38px; height: 13px; border-radius: 3px; background: #a5a9ad; color: #555; font-size: 9px; line-height: 12px; }
.navbar { position: absolute; right: 10px; top: 119px; border-radius: 3px; background: #62676b; }
.navbar svg { display: block; }
.scroll { position: absolute; right: 2px; top: 0; bottom: 0; width: 5px; background: #9ec7e8; }

/* Command line */
.command { position: relative; display: flex; height: 42px; background: #c5c4c3; }
.grip { display: flex; flex-direction: column; justify-content: space-between; align-items: center; width: 18px; padding: 11px 0 1px; background: #5b5b5b; font-size: 17px; color: #eee; }
.grip svg { width: 11px; height: 11px; }
.cmdbody { flex: 1; display: flex; flex-direction: column; }
.history { flex: 1; padding: 9px 2px 0; color: #333; font: 9px/14px "Liberation Mono", "Noto Sans CJK SC", monospace; }
.prompt { display: flex; align-items: center; gap: 3px; height: 18px; padding-left: 4px; background: #fff; }
.prompt span { width: 12px; border: 1px solid #aaa; background: #eee; color: #555; font-size: 8px; line-height: 9px; }
.prompt input { flex: 1; padding-left: 4px; font-style: italic; }
.prompt input::placeholder { color: #aaa; opacity: 1; }
.ime { position: absolute; right: 2px; bottom: 1px; display: flex; align-items: center; justify-content: space-between; width: 133px; height: 21px; padding-right: 3px; background: #fff; color: #1c6cb5; }
.ime svg { width: 13px; height: 13px; }
.ime b { font-size: 12px; }
.ime .sogou { align-self: flex-end; width: 10px; height: 22px; }

/* Status bar */
.status { display: flex; height: 22px; padding-left: 8px; background: #484848; }
.sheet { width: 39px; height: 15px; color: #999; background: #555; clip-path: polygon(0 0, 100% 0, 35px 100%, 4px 100%); }
.sheet.on { background: #7b7b7b; color: #fff; font-weight: 700; }
.icons { display: flex; align-items: center; justify-content: space-between; width: 133px; margin-left: auto; padding: 0 3px; background: #505050; }
.icons svg { width: 14px; height: 14px; }
.icons .act { width: 16px; height: 20px; background: #303d55; }

/* On-screen keyboard window */
.osk { position: absolute; left: 95px; top: 333px; width: 850px; border-bottom: 2px solid #3a3a3a; background: #1a1a1a; color: #e4e4e4; }
.osk header { display: flex; align-items: center; gap: 4px; height: 24px; padding: 0 12px 0 6px; background: #fff; color: #999; }
.osk header div { display: flex; gap: 24px; margin-left: auto; }
.osk header div svg { width: 12px; height: 12px; }
.keys { display: flex; height: 216px; padding: 39px 3px 3px; }
.keys button { position: relative; padding: 0 0 0 4px; background: #303030; font-size: 15px; line-height: 22px; text-align: left; }
.main { flex: 1; display: grid; grid-auto-rows: 1fr; gap: 3px; }
.row { display: flex; gap: 3px; min-width: 0; }
.row button { display: flex; flex: 0 0 5.97%; align-items: flex-start; }
.row .ch { padding-left: 5px; font-size: 18px; }
.row .two { justify-content: space-between; align-items: flex-end; padding: 0 12px 0 4px; font-size: 17px; line-height: 23px; }
.row .two sup { align-self: flex-start; color: #707070; font-size: 13px; line-height: 20px; vertical-align: top; }
.row .mid { align-items: center; justify-content: center; padding: 0; }
.row .w-tab { flex-basis: 9.2%; }
.row .w-caps { flex-basis: 12.4%; }
.row .w-shift { flex-basis: 15.7%; }
.row .w-menu { flex-basis: 6.8%; }
.row .w-rest { flex: 1 1 0; }
.row button > svg { margin-top: 2px; }
.row svg path:only-child:not([fill]) { fill: none; stroke: #e4e4e4; stroke-width: 1.800px; }
.row .mid svg { margin: 0; }
.keys .down { background: #e2e2e2; color: #222; }
.cursor { position: absolute; left: 22px; top: 12px; }
.ring { outline: 2px solid #d5333a; z-index: 1; }
.nav { display: grid; grid-template-columns: 49px 49px; grid-auto-rows: 1fr; gap: 3px; margin: 0 6px 0 9px; }
.side { display: grid; grid-auto-rows: 1fr; gap: 3px; width: 49px; }
.keys .nav button { display: flex; font-size: 14px; }
.keys .side button, .keys .nav button:nth-child(n+9) { display: flex; font-size: 16px; }
.keys button:disabled { color: #6d6d6d; }
```
